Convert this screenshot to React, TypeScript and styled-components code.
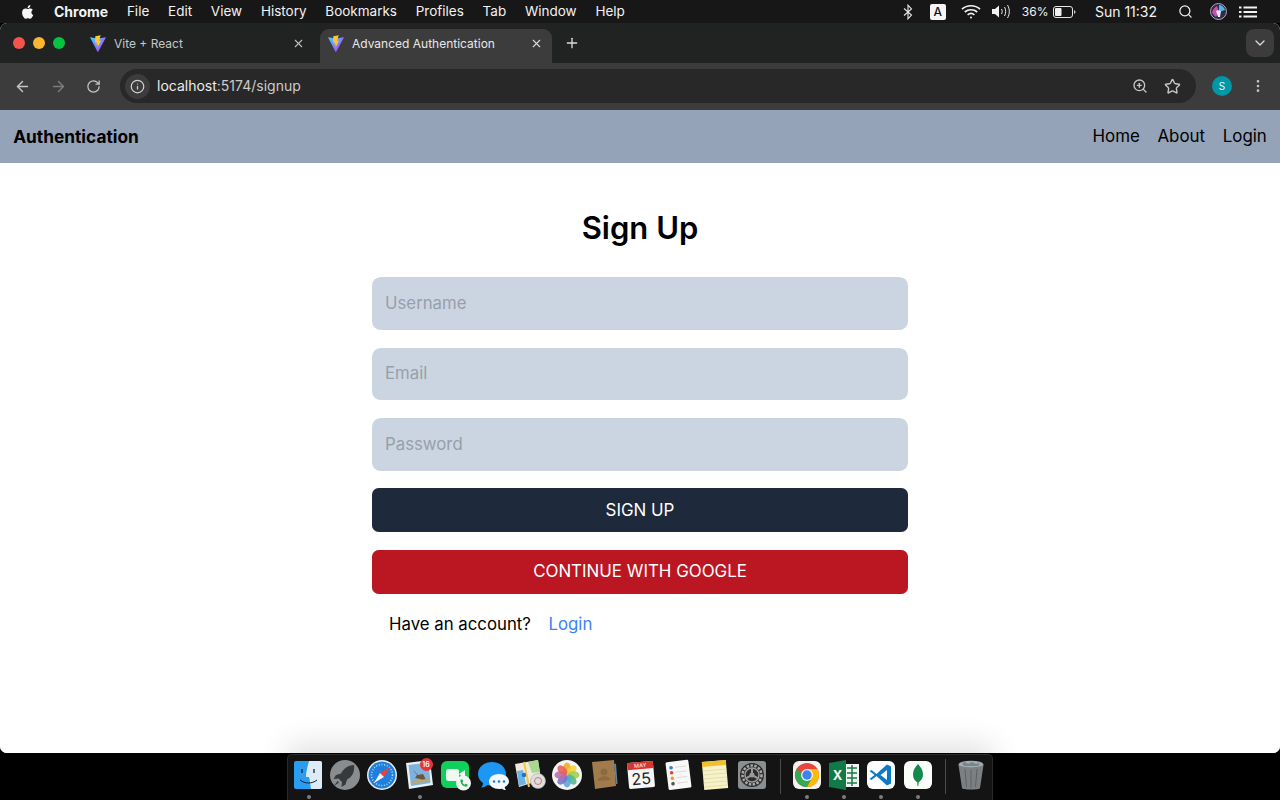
import React from "react";
import styled, { createGlobalStyle } from "styled-components";
import {
  ArrowLeft,
  ArrowRight,
  ChevronDown,
  Info,
  MoreVertical,
  Plus,
  RotateCw,
  Search,
  Star,
  X,
  ZoomIn,
} from "lucide-react";

const GlobalStyle = createGlobalStyle`
  html, body { margin: 0; padding: 0; background: #000; overflow: hidden; }
  * { box-sizing: border-box; }
  #root { height: 800px; }
`;

const Screen = styled.div`
  width: 1280px;
  height: 800px;
  display: flex;
  flex-direction: column;
  background: #000;
  font-family: Inter, "Liberation Sans", sans-serif;
  overflow: hidden;
`;

/* mac menu bar */
const MenuBar = styled.div`
  height: 23px;
  flex: none;
  display: flex;
  align-items: center;
  padding-left: 20px;
  background: #171717;
  color: #f2f2f2;
  font-size: 13.5px;
`;
const AppleBox = styled.span`
  display: flex;
  width: 34px;
`;
const MenuItems = styled.div`
  display: flex;
  gap: 18.75px;
`;
const MenuItem = styled.span<{ $bold?: boolean }>`
  font-weight: ${(p) => (p.$bold ? 700 : 400)};
  font-size: ${(p) => (p.$bold ? "14px" : "13.5px")};
  white-space: nowrap;
`;
const StatusArea = styled.div`
  margin-left: auto;
  display: flex;
  align-items: center;
  padding-right: 23px;
`;
const KeyboardBadge = styled.span`
  width: 16px;
  height: 16px;
  margin: 0 15px 0 17px;
  border-radius: 2px;
  background: #f5f5f5;
  color: #111;
  font-size: 12px;
  font-weight: 500;
  display: flex;
  align-items: center;
  justify-content: center;
`;
const Percent = styled.span`
  margin: 0 4.5px 0 10px;
  font-size: 12px;
`;
const Clock = styled.span`
  margin: 0 21px 0 19px;
  font-size: 14px;
`;
const VolumeSlot = styled.span`
  display: flex;
  margin-left: 10px;
`;
const SearchSlot = styled.span`
  display: flex;
  margin-right: 17px;
`;
const SiriSlot = styled.span`
  display: flex;
  margin-right: 12px;
`;

/* browser window */
const BrowserWindow = styled.div`
  height: 730px;
  flex: none;
  display: flex;
  flex-direction: column;
  border-radius: 7px;
  background: #fff;
  overflow: hidden;
`;
const TabStrip = styled.div`
  height: 40px;
  flex: none;
  display: flex;
  align-items: flex-end;
  padding-left: 12px;
  background: #212322;
`;
const Lights = styled.div`
  display: flex;
  gap: 8px;
  align-self: center;
  margin: 0 17px 0 1px;
`;
const Light = styled.span<{ $color: string }>`
  width: 12px;
  height: 12px;
  border-radius: 50%;
  background: ${(p) => p.$color};
`;
const Tab = styled.div<{ $active?: boolean }>`
  width: ${(p) => (p.$active ? "232px" : "238px")};
  height: 34px;
  display: flex;
  align-items: center;
  padding: 0 ${(p) => (p.$active ? "9.5px" : "15.5px")} 6px 8px;
  border-radius: 9px 9px 0 0;
  background: ${(p) => (p.$active ? "#3c3c3c" : "transparent")};
  color: ${(p) => (p.$active ? "#e8e8e8" : "#c4c6c6")};
  font-size: 12px;
`;
const TabTitle = styled.span`
  margin-left: 8px;
  flex: 1;
  white-space: nowrap;
`;
const NewTab = styled.span`
  display: flex;
  margin: 0 0 0 12px;
  align-self: center;
  color: #dcdcdc;
`;
const TabMenu = styled.span`
  margin: 0 6px 0 auto;
  align-self: center;
  width: 28px;
  height: 28px;
  border-radius: 8px;
  background: #3c3c3c;
  color: #d8d8d8;
  display: flex;
  align-items: center;
  justify-content: center;
`;
const Toolbar = styled.div`
  height: 47px;
  flex: none;
  display: flex;
  align-items: center;
  padding: 0 0 1px 14px;
  background: #3c3c3c;
  color: #c6c6c6;
`;
const NavIcon = styled.span<{ $dim?: boolean }>`
  display: flex;
  width: 36px;
  color: ${(p) => (p.$dim ? "#7d7d7d" : "#c6c6c6")};
`;
const Omnibox = styled.div`
  width: 1076px;
  height: 34px;
  margin-left: -2px;
  display: flex;
  align-items: center;
  padding: 0 15px 0 5px;
  border-radius: 17px;
  background: #282828;
`;
const InfoChip = styled.span`
  width: 25px;
  height: 25px;
  border-radius: 50%;
  background: #3c3c3c;
  display: flex;
  align-items: center;
  justify-content: center;
`;
const Url = styled.span`
  margin: 0 0 2px 7px;
  font-size: 14px;
  color: #c9cbcb;
`;
const UrlHost = styled.span`
  color: #ececec;
`;
const OmniActions = styled.span`
  margin-left: auto;
  display: flex;
  align-items: center;
  gap: 16px;
`;
const Avatar = styled.span`
  width: 20px;
  height: 20px;
  margin: 0 18px 0 16px;
  border-radius: 50%;
  background: #0097a7;
  color: #e9f7f8;
  font-size: 10px;
  display: flex;
  align-items: center;
  justify-content: center;
`;

/* the page itself */
const Page = styled.div`
  flex: 1;
  min-height: 0;
  background: #fff;
  color: #000;
`;
const Header = styled.header`
  height: 53px;
  display: flex;
  align-items: center;
  justify-content: space-between;
  padding: 0 13.2px 1px;
  background: #94a3b8;
  font-size: 16.9px;
`;
const Brand = styled.span`
  font-size: 17.3px;
  font-weight: 700;
`;
const Nav = styled.nav`
  display: flex;
  gap: 17.6px;
`;
const Main = styled.main`
  width: 536px;
  margin: 0 auto;
  display: flex;
  flex-direction: column;
`;
const Title = styled.h1`
  margin: 45px 0 29.2px;
  height: 40px;
  line-height: 40px;
  text-align: center;
  font-size: 31px;
  font-weight: 600;
`;
const Form = styled.form`
  display: flex;
  flex-direction: column;
  gap: 17.6px;
`;
const Input = styled.input`
  height: 52.8px;
  padding: 0 13px 1px;
  border: 0;
  border-radius: 8.8px;
  background: #cbd5e1;
  font: 400 16.8px Inter, "Liberation Sans", sans-serif;
  outline: none;
  &::placeholder {
    color: #979fab;
    opacity: 1;
  }
`;
const Button = styled.button<{ $bg: string }>`
  height: 44px;
  padding: 0 0 1px;
  border: 0;
  border-radius: 6.6px;
  background: ${(p) => p.$bg};
  color: #fff;
  font: 400 16.9px Inter, "Liberation Sans", sans-serif;
`;
const SwitchRow = styled.div`
  display: flex;
  gap: 17.6px;
  padding-left: 17px;
  margin-top: 17px;
  font-size: 16.8px;
  line-height: 26px;
`;
const LoginLink = styled.a`
  color: #3b82f6;
`;

/* dock */
const DockRow = styled.div`
  flex: 1;
  display: flex;
  justify-content: center;
  padding-top: 1px;
  background: #000;
`;
const Dock = styled.div`
  position: relative;
  width: 706px;
  display: flex;
  align-items: flex-start;
  padding: 4px 0 0 1.5px;
  border-radius: 5px 5px 0 0;
  border: 1px solid #2b2b2b;
  border-bottom: 0;
  background: #141414;
  box-shadow: 0 -10px 30px rgba(0, 0, 0, 0.12);
`;
const DockItem = styled.div`
  position: relative;
  width: 37px;
  height: 40px;
  display: flex;
  flex-direction: column;
  align-items: center;
`;
const RunDot = styled.span`
  position: absolute;
  left: 17px;
  top: 36px;
  width: 4px;
  height: 4px;
  border-radius: 50%;
  background: #7c7c7c;
`;
const Badge = styled.span`
  position: absolute;
  left: 19px;
  top: -1px;
  width: 13px;
  height: 13px;
  border-radius: 50%;
  background: #e8333b;
  color: #fff;
  font-size: 7px;
  font-weight: 600;
  display: flex;
  align-items: center;
  justify-content: center;
`;
const DockDivider = styled.span<{ $left: number; $right: number }>`
  width: 1px;
  height: 35px;
  margin: 0 ${(p) => p.$right}px 0 ${(p) => p.$left}px;
  background: #4a4a4a;
`;

const Apple = () => (
  <svg width="16" height="18" viewBox="0 0 24 24" fill="#f5f5f5">
    <path d="M17.05 12.54c-.03-2.6 2.12-3.85 2.22-3.91-1.21-1.77-3.09-2.01-3.76-2.04-1.6-.16-3.12.94-3.93.94-.81 0-2.06-.92-3.39-.89-1.74.03-3.35 1.01-4.25 2.57-1.81 3.14-.46 7.8 1.3 10.35.86 1.25 1.89 2.65 3.24 2.6 1.3-.05 1.79-.84 3.36-.84s2.01.84 3.39.81c1.4-.02 2.28-1.27 3.14-2.53.99-1.45 1.4-2.85 1.42-2.93-.03-.01-2.72-1.04-2.74-4.13zM14.47 4.9c.72-.87 1.2-2.08 1.07-3.28-1.03.04-2.28.69-3.02 1.55-.66.77-1.24 2-1.09 3.18 1.15.09 2.33-.58 3.04-1.45z" />
  </svg>
);

const Bluetooth = () => (
  <svg width="10" height="16" viewBox="0 0 10 16" fill="none" stroke="#e8e8e8" strokeWidth="1.1">
    <path d="M1 4.5 8.5 11 5 14.8V1.2L8.5 5 1 11.5" />
  </svg>
);

const Wifi = () => (
  <svg width="20" height="15" viewBox="0 0 20 15" fill="none" stroke="#f2f2f2" strokeWidth="1.7">
    <path d="M1 5.2c5-4.6 13-4.6 18 0M3.8 8c3.4-3 9-3 12.4 0M6.6 10.8c1.9-1.5 4.9-1.5 6.8 0" />
    <circle cx="10" cy="13.4" r="1" fill="#f2f2f2" stroke="none" />
  </svg>
);

const Volume = () => (
  <svg width="21" height="15" viewBox="0 0 21 15" fill="none" stroke="#ededed" strokeWidth="1">
    <path d="M1 5h3l4-3.5v12L4 10H1z" fill="#f2f2f2" stroke="none" />
    <path d="M10.5 5c.9 1.5.9 3.5 0 5M13.5 3c1.6 2.8 1.6 6.2 0 9M16.5 1c2.4 4 2.4 9 0 13" />
  </svg>
);

const Battery = () => (
  <svg width="23" height="12" viewBox="0 0 23 12">
    <rect x=".5" y=".5" width="19" height="11" rx="2.5" fill="none" stroke="#e6e6e6" />
    <rect x="2" y="2" width="6.5" height="8" rx="1" fill="#f2f2f2" />
    <path d="M21 4.2c1 .3 1.5 1 1.5 1.8s-.5 1.5-1.500 1.800z" fill="#cfcfcf" />
  </svg>
);

const Siri = () => (
  <svg width="17" height="17" viewBox="0 0 17 17">
    <circle cx="8.500" cy="8.500" r="8" fill="#2d2a4a" stroke="#cfcfd8" strokeWidth=".8" />
    <path d="M2 9c2-4 3-5 5-6l2 6-3 5C4 13 3 11 2 9z" fill="#c94fb0" />
    <path d="M9 2c3 0 5 2 6 5l-6 2z" fill="#4fb6e8" />
    <path d="M6 8c1.500-1 3-1 5 0l-1 6H8z" fill="#e9e9f4" />
  </svg>
);

const ListIcon = () => (
  <svg width="18" height="12" viewBox="0 0 18 12" fill="#f2f2f2">
    <rect x="0" y="0.500" width="2.500" height="2" />
    <rect x="0" y="5" width="2.500" height="2" />
    <rect x="0" y="9.500" width="2.500" height="2" />
    <rect x="4.500" y="0.500" width="13.500" height="2" />
    <rect x="4.500" y="5" width="13.500" height="2" />
    <rect x="4.500" y="9.500" width="13.500" height="2" />
  </svg>
);

const ViteLogo = () => (
  <svg width="16" height="17" viewBox="0 0 16 17">
    <defs>
      <linearGradient id="vt" x1="0" y1="0" x2="1" y2="1">
        <stop offset="0" stopColor="#41d1ff" />
        <stop offset="1" stopColor="#bd34fe" />
      </linearGradient>
    </defs>
    <path d="M0 2.300 7.700 3.600 16 2.300 8.200 16.700c-.2.300-.5.300-.7 0z" fill="url(#vt)" />
    <path d="M10.700.2 5.300 1.300l-.3 6.300 1.800-.4-.4 2.600 1.500-.4-.5 3.400 3.800-7.300-2 .4.700-2.700-.1-.1z" fill="#ffc72a" />
  </svg>
);

/* dock artwork, all on a 32 unit grid */
const Finder = () => (
  <svg width="32" height="32" viewBox="0 0 32 32">
    <rect x="2" y="2" width="28" height="28" rx="2" fill="#2a9df0" />
    <path d="M17 2h11a2 2 0 0 1 2 2v24a2 2 0 0 1-2 2H19c-1-5-1-9-2-12h-3C14 12 16 6 17 2z" fill="#dcebf6" />
    <path d="M8 21c5 4 12 4 17 0" fill="none" stroke="#123" strokeWidth="1" />
    <path d="M10 10v4M22 10v4" stroke="#123" strokeWidth="1.300" />
  </svg>
);
const Launchpad = () => (
  <svg width="32" height="32" viewBox="0 0 32 32">
    <circle cx="16" cy="16" r="15" fill="#8a8d90" />
    <path d="M25 6c-6 .5-10.500 3.500-13 8.500l-5 1.500-2.500 4 5-.5 3.500 3.500-.5 5 4-2.500 1.500-5C23 18 26 13 25 6z" fill="#37393c" />
    <path d="M8.500 22 5 27l5-3.500z" fill="#37393c" />
  </svg>
);
const Safari = () => (
  <svg width="32" height="32" viewBox="0 0 32 32">
    <circle cx="16" cy="16" r="15" fill="#e6edf3" />
    <circle cx="16" cy="16" r="13.500" fill="#1f7fdc" />
    <circle cx="16" cy="16" r="10.500" fill="none" stroke="#bcd9f4" strokeWidth="1.500" strokeDasharray="1 1.700" />
    <path d="M24 8 14 14l4 4z" fill="#ef4036" />
    <path d="M8 24l6-10 4 4z" fill="#f3f3f3" />
  </svg>
);
const MailStamp = () => (
  <svg width="32" height="32" viewBox="0 0 32 32">
    <path d="M3 4 27 1l3 25-24 4z" fill="#eaf0f6" />
    <path d="M5.500 6 25.500 3.500 27.500 24 8 27z" fill="#7fb2dc" />
    <path d="M9 10l6 6 5-1 4 8-7-3-5-1 2-3z" fill="#6d5434" />
    <path d="M8.500 25l18-2.500-.5-3-18 3z" fill="#b9a777" />
  </svg>
);
const FaceTime = () => (
  <svg width="32" height="32" viewBox="0 0 32 32">
    <rect x="1" y="2" width="28" height="27" rx="6" fill="#0ed05a" />
    <rect x="6" y="10" width="13" height="12" rx="2.500" fill="#eef9f0" />
    <path d="M19 15l6-4v9z" fill="#eef9f0" />
    <circle cx="23.500" cy="24" r="7.500" fill="#f1f6f2" />
    <path d="M20.500 20.500l2 0 .8 2-1 .9c.5 1 1.300 1.800 2.300 2.300l.9-1 2 .8v2c-4.500.5-7.500-2.500-7-7z" fill="#23b14d" />
  </svg>
);
const Messages = () => (
  <svg width="32" height="32" viewBox="0 0 32 32">
    <path d="M15 3C7 3 1 8 1 15c0 4 2 7 5 9 0 2-1 3.500-2 4.500 3 0 5-1 6.500-2.500 1.500.5 3 .5 4.500.5 8 0 14-5 14-11.500S23 3 15 3z" fill="#1e96f5" />
    <path d="M22 15c-5.500 0-10 3-10 7.500s4.500 7.500 10 7.500c1 0 2 0 3-.3 1 .8 2.500 1.300 4 1.300-.7-.8-1.200-1.800-1.300-3 2.600-1.300 4.300-3.200 4.300-5.500C32 18 27.500 15 22 15z" fill="#f4f8fc" />
    <circle cx="17" cy="22.500" r="1.300" fill="#1e7be0" />
    <circle cx="22" cy="22.500" r="1.300" fill="#1e7be0" />
    <circle cx="27" cy="22.500" r="1.300" fill="#1e7be0" />
  </svg>
);
const MapsIcon = () => (
  <svg width="32" height="32" viewBox="0 0 32 32">
    <path d="M1 5 24 1l3 20L5 28z" fill="#f0eadb" />
    <path d="M14 3l10-2 2 12-8 1z" fill="#a8d88f" />
    <path d="M3 12l6-1 3 14-7 2z" fill="#6cb4e6" />
    <path d="M10 3l5 25" stroke="#f0c64d" strokeWidth="2" />
    <circle cx="24" cy="22" r="7.500" fill="#dedede" stroke="#aaa" strokeWidth=".6" />
    <circle cx="24" cy="22" r="3.500" fill="none" stroke="#c77" strokeWidth="1" />
    <circle cx="10" cy="16" r="2.200" fill="#1f6fd0" />
  </svg>
);
const Photos = () => {
  const petals = ["#f5a623", "#f3d13a", "#9fcf4c", "#52b788", "#57a7dc", "#7a71c7", "#b76bb0", "#e8605a"];
  return (
    <svg width="32" height="32" viewBox="0 0 32 32">
      <circle cx="16" cy="16" r="15" fill="#f4f4f4" />
      {petals.map((c, i) => (
        <ellipse
          key={c}
          cx="16"
          cy="9.500"
          rx="3.800"
          ry="6"
          fill={c}
          opacity=".88"
          transform={`rotate(${i * 45} 16 16)`}
        />
      ))}
    </svg>
  );
};
const Contacts = () => (
  <svg width="32" height="32" viewBox="0 0 32 32">
    <path d="M4 3 26 1l2 26-21 3z" fill="#a27b4c" />
    <path d="M26 5l2-.2 1.500 20-1.500.2z" fill="#5f8a9e" />
    <circle cx="16" cy="13" r="3.500" fill="#8e6a3f" />
    <path d="M9.500 22c1-6 12-6 13-1z" fill="#8e6a3f" />
  </svg>
);
const CalendarIcon = () => (
  <svg width="32" height="32" viewBox="0 0 32 32">
    <g transform="rotate(-5 16 16)">
      <rect x="3" y="3" width="26" height="26" rx="1.500" fill="#f6f6f6" />
      <path d="M3 10V4.500A1.500 1.500 0 0 1 4.500 3h23A1.500 1.500 0 0 1 29 4.500V10z" fill="#d8372f" />
      <text x="16" y="8.500" textAnchor="middle" fontSize="5.500" fill="#fff" fontFamily="Inter, sans-serif">MAY</text>
      <text x="16" y="25.500" textAnchor="middle" fontSize="16" fill="#222" fontFamily="Inter, sans-serif">25</text>
    </g>
  </svg>
);
const Reminders = () => (
  <svg width="32" height="32" viewBox="0 0 32 32">
    <g transform="rotate(-7 16 16)">
      <rect x="5" y="2" width="23" height="28" rx="1.500" fill="#f8f8f8" />
      <circle cx="10" cy="8" r="1.800" fill="#2f7fe8" />
      <circle cx="10" cy="13" r="1.800" fill="#e8453c" />
      <circle cx="10" cy="18.500" r="1.800" fill="#f39a2b" />
      <circle cx="10" cy="24" r="1.800" fill="#555" />
      <path d="M14 8h11M14 13h11M14 18.500h11M14 24h11" stroke="#d5d5d5" strokeWidth=".8" />
    </g>
  </svg>
);
const Notes = () => (
  <svg width="32" height="32" viewBox="0 0 32 32">
    <g transform="rotate(-5 16 16)">
      <rect x="4" y="2" width="24" height="28" fill="#f8f2c8" />
      <rect x="4" y="2" width="24" height="5" fill="#f2c02e" />
      <path d="M4 11h24M4 15h24M4 19h24M4 23h24M4 27h24" stroke="#d8d1a0" strokeWidth=".6" />
    </g>
  </svg>
);
const SysPrefs = () => (
  <svg width="32" height="32" viewBox="0 0 32 32">
    <rect x="2" y="2" width="28" height="28" rx="3" fill="#8b8f91" />
    <circle cx="16" cy="16" r="12" fill="#2c2c2c" />
    <circle cx="16" cy="16" r="9.500" fill="none" stroke="#a9a9a9" strokeWidth="2.500" strokeDasharray="2.500 1.400" />
    <circle cx="16" cy="16" r="7" fill="none" stroke="#9a9a9a" strokeWidth="1.500" />
    <path d="M16 16V9.500M16 16l5.600 3.200M16 16l-5.600 3.200" stroke="#9a9a9a" strokeWidth="2" />
    <circle cx="16" cy="16" r="2.500" fill="#9a9a9a" />
  </svg>
);
const ChromeIcon = () => (
  <svg width="32" height="32" viewBox="0 0 32 32">
    <rect x="2" y="2" width="28" height="28" rx="6" fill="#f4f2ef" />
    <circle cx="16" cy="16" r="12" fill="#e8453c" />
    <path d="M5.600 10A12 12 0 0 0 16 28l5.200-9H16z" fill="#34a853" />
    <path d="M16 10h10.400A12 12 0 0 1 16 28l5.200-9z" fill="#fbbc05" />
    <circle cx="16" cy="16" r="6" fill="#f4f2ef" />
    <circle cx="16" cy="16" r="4.700" fill="#3f83ee" />
  </svg>
);
const ExcelIcon = () => (
  <svg width="32" height="32" viewBox="0 0 32 32">
    <rect x="14" y="5" width="17" height="23" fill="#f2f4f2" />
    <path d="M19 9h10M19 14h10M19 19h10M19 24h10M24 6v21" stroke="#1d7a48" strokeWidth="1.500" />
    <path d="M1 4 18 1v30L1 28z" fill="#127a47" />
    <text x="9.500" y="20.500" textAnchor="middle" fontSize="13" fontWeight="700" fill="#f4f4f4" fontFamily="Inter, sans-serif">X</text>
  </svg>
);
const VsCode = () => (
  <svg width="32" height="32" viewBox="0 0 32 32">
    <rect x="2" y="2" width="28" height="28" rx="6" fill="#fbfdff" />
    <path d="M22 5.500 26 7.500v17L22 26.500 11.500 17l-5 4L4.500 20l5-4-5-4 2-1 5 4z" fill="#0c78c6" />
    <path d="M22 11l-6.500 5 6.500 5z" fill="#fbfdff" />
  </svg>
);
const Mongo = () => (
  <svg width="32" height="32" viewBox="0 0 32 32">
    <rect x="2" y="2" width="28" height="28" rx="6" fill="#fbfdfb" />
    <path d="M16 5c3.500 3.500 5 7 5 10.500 0 4-2.500 6.500-4.300 7.800L16.300 27h-.8l-.3-3.700C13 22 11 19.500 11 15.500 11 12 12.500 8.500 16 5z" fill="#138a4c" />
  </svg>
);
const Trash = () => (
  <svg width="32" height="32" viewBox="0 0 32 32">
    <ellipse cx="16" cy="5.500" rx="12.500" ry="3.800" fill="#a8aaac" />
    <path d="M7 4l3-1 3 2 4-2 4 2 4-1-2 3H9z" fill="#6a8a96" />
    <path d="M3.500 6 7 29c.3 2 17.700 2 18 0l3.500-23c-4 3-21 3-25 0z" fill="#7d8083" />
    <path d="M10 10l1.500 18M16 11v18M22 10l-1.500 18" stroke="#5e6164" strokeWidth="1" />
  </svg>
);

type DockApp = { art: React.ReactNode; running?: boolean; badge?: string };

const firstGroup: DockApp[] = [
  { art: <Finder />, running: true },
  { art: <Launchpad /> },
  { art: <Safari /> },
  { art: <MailStamp />, running: true, badge: "16" },
  { art: <FaceTime /> },
  { art: <Messages /> },
  { art: <MapsIcon /> },
  { art: <Photos /> },
  { art: <Contacts /> },
  { art: <CalendarIcon /> },
  { art: <Reminders /> },
  { art: <Notes /> },
  { art: <SysPrefs /> },
];
const secondGroup: DockApp[] = [
  { art: <ChromeIcon />, running: true },
  { art: <ExcelIcon />, running: true },
  { art: <VsCode />, running: true },
  { art: <Mongo />, running: true },
];

const renderApp = (app: DockApp, i: number) => (
  <DockItem key={i}>
    {app.art}
    {app.badge && <Badge>{app.badge}</Badge>}
    {app.running && <RunDot />}
  </DockItem>
);

const menus = ["File", "Edit", "View", "History", "Bookmarks", "Profiles", "Tab", "Window", "Help"];

export default function App() {
  return (
    <Screen>
      <GlobalStyle />
      <MenuBar>
        <AppleBox>
          <Apple />
        </AppleBox>
        <MenuItems>
          <MenuItem $bold>Chrome</MenuItem>
          {menus.map((m) => (
            <MenuItem key={m}>{m}</MenuItem>
          ))}
        </MenuItems>
        <StatusArea>
          <Bluetooth />
          <KeyboardBadge>A</KeyboardBadge>
          <Wifi />
          <VolumeSlot>
            <Volume />
          </VolumeSlot>
          <Percent>36%</Percent>
          <Battery />
          <Clock>Sun 11:32</Clock>
          <SearchSlot>
            <Search size={15} color="#f0f0f0" />
          </SearchSlot>
          <SiriSlot>
            <Siri />
          </SiriSlot>
          <ListIcon />
        </StatusArea>
      </MenuBar>

      <BrowserWindow>
        <TabStrip>
          <Lights>
            <Light $color="#f5544d" />
            <Light $color="#fbb52f" />
            <Light $color="#08c33f" />
          </Lights>
          <Tab>
            <ViteLogo />
            <TabTitle>Vite + React</TabTitle>
            <X size={13} color="#bdbdbd" />
          </Tab>
          <Tab $active>
            <ViteLogo />
            <TabTitle>Advanced Authentication</TabTitle>
            <X size={13} color="#d8d8d8" />
          </Tab>
          <NewTab>
            <Plus size={16} />
          </NewTab>
          <TabMenu>
            <ChevronDown size={16} />
          </TabMenu>
        </TabStrip>
        <Toolbar>
          <NavIcon>
            <ArrowLeft size={17} />
          </NavIcon>
          <NavIcon $dim>
            <ArrowRight size={17} />
          </NavIcon>
          <NavIcon>
            <RotateCw size={15} />
          </NavIcon>
          <Omnibox>
            <InfoChip>
              <Info size={15} color="#d0d0d0" />
            </InfoChip>
            <Url>
              <UrlHost>localhost</UrlHost>:5174/signup
            </Url>
            <OmniActions>
              <ZoomIn size={16} />
              <Star size={17} />
            </OmniActions>
          </Omnibox>
          <Avatar>S</Avatar>
          <MoreVertical size={16} />
        </Toolbar>
        <Page>
          <Header>
            <Brand>Authentication</Brand>
            <Nav>
              <span>Home</span>
              <span>About</span>
              <span>Login</span>
            </Nav>
          </Header>
          <Main>
            <Title>Sign Up</Title>
            <Form onSubmit={(e) => e.preventDefault()}>
              <Input type="text" placeholder="Username" />
              <Input type="email" placeholder="Email" />
              <Input type="password" placeholder="Password" />
              <Button $bg="#1e293b">SIGN UP</Button>
              <Button $bg="#bb1722">CONTINUE WITH GOOGLE</Button>
            </Form>
            <SwitchRow>
              <span>Have an account?</span>
              <LoginLink>Login</LoginLink>
            </SwitchRow>
          </Main>
        </Page>
      </BrowserWindow>

      <DockRow>
        <Dock>
          {firstGroup.map(renderApp)}
          <DockDivider $left={9.5} $right={7} />
          {secondGroup.map(renderApp)}
          <DockDivider $left={8.5} $right={6.5} />
          {renderApp({ art: <Trash /> }, 99)}
        </Dock>
      </DockRow>
    </Screen>
  );
}
